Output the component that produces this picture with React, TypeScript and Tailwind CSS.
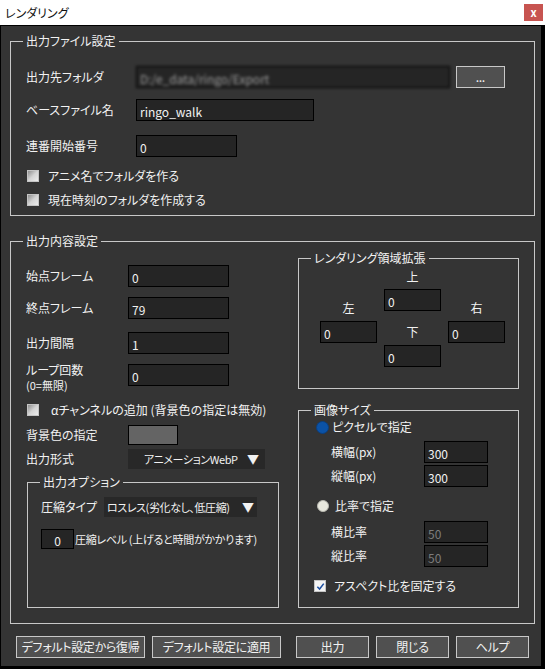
import type { ReactNode } from "react";

function Group({ title, className, children }: { title: string; className: string; children: ReactNode }) {
  return (
    <fieldset className={`border border-[#c8c8c8] ${className}`}>
      <legend className="ml-[12px] px-[3px] leading-[16px]">{title}</legend>
      {children}
    </fieldset>
  );
}

function Field({ value, className = "", dim = false, center = false }: { value: string; className?: string; dim?: boolean; center?: boolean }) {
  return (
    <div
      className={`flex h-[22px] shrink-0 items-center border border-black bg-[#252525] px-[3px] pt-[3px] leading-[16px] ${dim ? "text-[#7c7c7c]" : "text-[#f2f2f2]"} ${center ? "justify-center" : ""} ${className}`}
    >
      {value}
    </div>
  );
}

function Check({ checked = false }: { checked?: boolean }) {
  return (
    <span
      className={`flex h-[12px] w-[12px] shrink-0 items-center justify-center border border-[#c4c4c4] ${checked ? "bg-[#f4f4f4]" : "bg-gradient-to-br from-[#8e8e8e] via-[#d4d4d4] to-[#ececec]"}`}
    >
      {checked && (
        <svg viewBox="0 0 10 10" className="h-[9px] w-[9px]">
          <path d="M1.5 5.2 L4 7.8 L8.6 1.8" fill="none" stroke="#1d4fa1" strokeWidth="1.7" />
        </svg>
      )}
    </span>
  );
}

function Select({ text, className }: { text: string; className: string }) {
  return (
    <div className={`flex h-[20px] shrink-0 items-center justify-between bg-[#282828] leading-[16px] ${className}`}>
      <span className="text-[11px] tracking-[-0.4px]">{text}</span>
      <span className="text-[12px]">▼</span>
    </div>
  );
}

function Btn({ label, w }: { label: string; w: string }) {
  return (
    <button
      type="button"
      className={`flex h-[22px] shrink-0 items-center justify-center border border-[#c8c8c8] bg-[#505050] text-[12px] leading-[16px] tracking-[-0.3px] text-[#f2f2f2] ${w}`}
    >
      {label}
    </button>
  );
}

export default function App() {
  return (
    <div className="w-[545px] whitespace-nowrap bg-white font-['Noto_Sans_CJK_JP','Noto_Sans',sans-serif] text-[12px] [font-feature-settings:'palt']">
      {/* title bar */}
      <div className="flex h-[25px] items-center pl-[5px]">
        <span className="text-[12px] leading-[16px] text-[#111]">レンダリング</span>
        <span className="ml-auto mr-[2px] flex h-[17px] w-[19px] items-center justify-center bg-[#c75450] text-[11px] font-bold leading-none text-white">
          x
        </span>
      </div>

      <div className="flex h-[644px] flex-col border-t border-b-[3px] border-l border-r-[4px] border-black bg-[#343434] pl-[9px] pt-[7px] text-[#f2f2f2]">
        {/* 出力ファイル設定 */}
        <Group title="出力ファイル設定" className="h-[183px] w-[525px]">
          <div className="flex flex-col pl-[15px]">
            <div className="mt-[17px] flex items-center">
              <span className="w-[110px]">出力先フォルダ</span>
              <Field value="D:/e_data/ringo/Export" className="w-[314px] !text-[#9a9a9a] blur-[1.6px]" />
              <button
                type="button"
                className="ml-[6px] flex h-[22px] w-[49px] items-center justify-center border border-[#c8c8c8] bg-[#505050] pt-[2px] text-[9px] font-bold leading-none"
              >
                ...
              </button>
            </div>
            <div className="mt-[11px] flex items-center">
              <span className="w-[110px]">ベースファイル名</span>
              <Field value="ringo_walk" className="w-[178px]" />
            </div>
            <div className="mt-[14px] flex items-center">
              <span className="w-[110px]">連番開始番号</span>
              <Field value="0" className="w-[101px]" />
            </div>
            <div className="mt-[11px] flex h-[16px] items-center gap-[9px] pl-[1px]">
              <Check />
              <span>アニメ名でフォルダを作る</span>
            </div>
            <div className="mt-[8px] flex h-[16px] items-center gap-[9px] pl-[1px]">
              <Check />
              <span>現在時刻のフォルダを作成する</span>
            </div>
          </div>
        </Group>

        {/* 出力内容設定 */}
        <Group title="出力内容設定" className="mt-[17px] h-[391px] w-[525px]">
          <div className="flex">
            {/* left column */}
            <div className="ml-[15px] flex w-[253px] flex-col">
              <div className="mt-[16px] flex items-center">
                <span className="w-[102px]">始点フレーム</span>
                <Field value="0" className="w-[101px]" />
              </div>
              <div className="mt-[10px] flex items-center">
                <span className="w-[102px]">終点フレーム</span>
                <Field value="79" className="w-[101px]" />
              </div>
              <div className="mt-[13px] flex items-center">
                <span className="w-[102px]">出力間隔</span>
                <Field value="1" className="w-[101px]" />
              </div>
              <div className="mt-[8px] flex items-start">
                <span className="flex w-[102px] flex-col">
                  <span className="leading-[16px]">ループ回数</span>
                  <span className="text-[11px] leading-[14px]">(0=無限)</span>
                </span>
                <Field value="0" className="mt-[2px] w-[101px]" />
              </div>
              <div className="mt-[10px] flex h-[16px] items-center gap-[12px] pl-[1px]">
                <Check />
                <span>αチャンネルの追加 (背景色の指定は無効)</span>
              </div>
              <div className="mt-[7px] flex items-center">
                <span className="w-[102px]">背景色の指定</span>
                <span className="h-[20px] w-[50px] border border-black bg-[#646464]" />
              </div>
              <div className="mt-[4px] flex items-center">
                <span className="w-[102px]">出力形式</span>
                <Select text="アニメーションWebP" className="w-[137px] pl-[16px] pr-[6px]" />
              </div>
              <Group title="出力オプション" className="ml-[1px] mt-[5px] h-[134px] w-[252px]">
                <div className="flex flex-col pl-[13px]">
                  <div className="mt-[7px] flex items-center">
                    <span className="w-[63px]">圧縮タイプ</span>
                    <Select text="ロスレス(劣化なし、低圧縮)" className="w-[153px] pl-[3px] pr-[3px]" />
                  </div>
                  <div className="mt-[12px] flex items-center">
                    <Field value="0" center className="!h-[20px] w-[33px]" />
                    <span className="ml-[1px] text-[11px] tracking-[-0.3px]">圧縮レベル (上げると時間がかかります)</span>
                  </div>
                </div>
              </Group>
            </div>

            {/* right column */}
            <div className="ml-[19px] flex w-[221px] flex-col">
              <Group title="レンダリング領域拡張" className="mt-[1px] h-[139px] w-[221px]">
                <div className="flex gap-[7px] pl-[21px]">
                  <div className="flex w-[57px] flex-col">
                    <span className="mt-[34px] h-[16px] text-center leading-[16px]">左</span>
                    <Field value="0" className="mt-[5px] w-[57px]" />
                  </div>
                  <div className="flex w-[57px] flex-col">
                    <span className="mt-[3px] h-[16px] text-center leading-[16px]">上</span>
                    <Field value="0" className="mt-[4px] w-[57px]" />
                    <span className="mt-[13px] h-[16px] text-center leading-[16px]">下</span>
                    <Field value="0" className="mt-[5px] w-[57px]" />
                  </div>
                  <div className="flex w-[57px] flex-col">
                    <span className="mt-[34px] h-[16px] text-center leading-[16px]">右</span>
                    <Field value="0" className="mt-[5px] w-[57px]" />
                  </div>
                </div>
              </Group>

              <Group title="画像サイズ" className="mt-[13px] h-[206px] w-[221px]">
                <div className="flex flex-col">
                  <div className="mt-[1px] flex h-[16px] items-center gap-[3px] pl-[17px]">
                    <span className="h-[13px] w-[13px] rounded-full border border-[#0a3f80] bg-[#0b52a6]" />
                    <span>ピクセルで指定</span>
                  </div>
                  <div className="mt-[6px] flex items-center pl-[32px]">
                    <span className="w-[93px]">横幅(px)</span>
                    <Field value="300" className="w-[64px]" />
                  </div>
                  <div className="mt-[2px] flex items-center pl-[32px]">
                    <span className="w-[93px]">縦幅(px)</span>
                    <Field value="300" className="w-[64px]" />
                  </div>
                  <div className="mt-[11px] flex h-[16px] items-center gap-[6px] pl-[18px]">
                    <span className="h-[12px] w-[12px] rounded-full border border-[#b8b8b0] bg-[#e8e8de]" />
                    <span>比率で指定</span>
                  </div>
                  <div className="mt-[7px] flex items-center pl-[32px]">
                    <span className="w-[93px]">横比率</span>
                    <Field value="50" dim className="w-[64px]" />
                  </div>
                  <div className="mt-[2px] flex items-center pl-[32px]">
                    <span className="w-[93px]">縦比率</span>
                    <Field value="50" dim className="w-[64px]" />
                  </div>
                  <div className="mt-[11px] flex h-[16px] items-center gap-[8px] pl-[15px]">
                    <Check checked />
                    <span>アスペクト比を固定する</span>
                  </div>
                </div>
              </Group>
            </div>
          </div>
        </Group>

        {/* buttons */}
        <div className="mt-[12px] flex pl-[6px]">
          <Btn label="デフォルト設定から復帰" w="w-[129px]" />
          <span className="ml-[7px]" />
          <Btn label="デフォルト設定に適用" w="w-[129px]" />
          <span className="ml-[15px]" />
          <Btn label="出力" w="w-[73px]" />
          <span className="ml-[7px]" />
          <Btn label="閉じる" w="w-[73px]" />
          <span className="ml-[7px]" />
          <Btn label="ヘルプ" w="w-[73px]" />
        </div>
      </div>
    </div>
  );
}
